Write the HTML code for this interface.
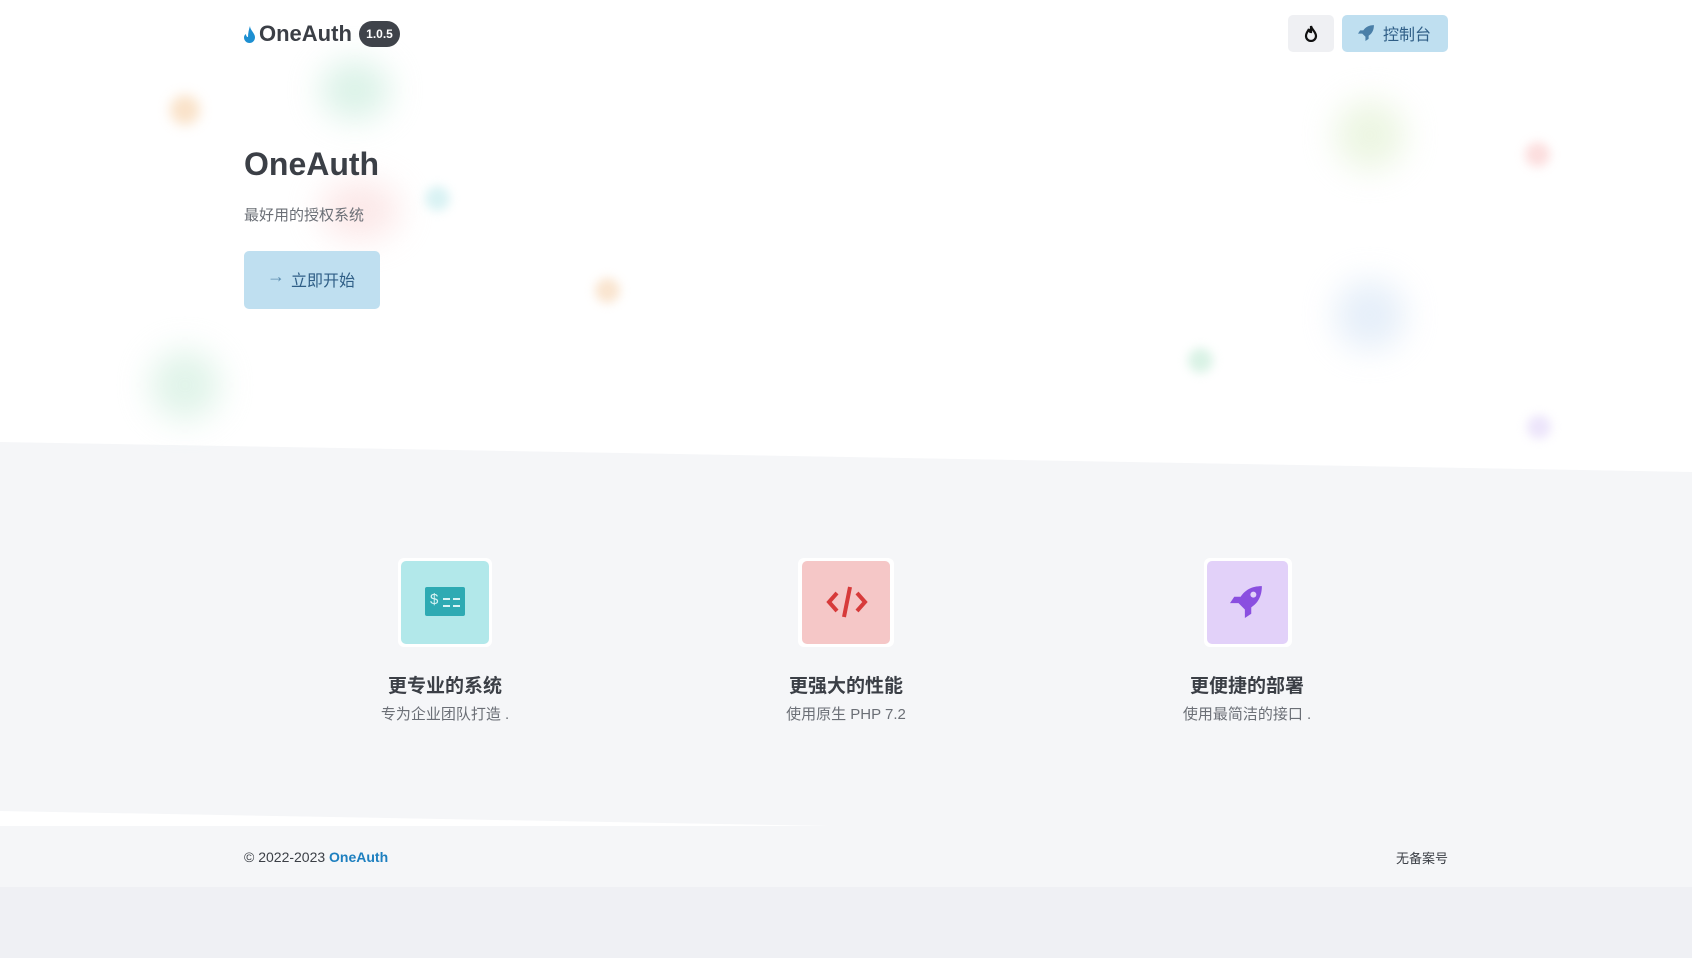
<!DOCTYPE html>
<html><head><meta charset="utf-8"><style>
*{margin:0;padding:0;box-sizing:border-box}
body{width:1692px;height:958px;background:#eff0f4;font-family:"Liberation Sans","Noto Sans CJK SC",sans-serif;position:relative;overflow:hidden;color:#3b3f46}
.abs{position:absolute}
.blob{position:absolute;border-radius:50%;filter:blur(16px);opacity:.75}
</style></head><body>
<div class="abs" style="left:0;top:0;width:1692px;height:887px;background:#f5f6f8"></div>
<svg class="abs" style="left:0;top:0" width="1692" height="958">
<polygon points="0,0 1692,0 1692,472 0,442" fill="#fff"/>
<polygon points="0,811 830,826 0,826" fill="#fff"/>
</svg>
<div class="blob" style="left:320px;top:60px;width:70px;height:60px;background:#cfeee0"></div>
<div class="blob" style="left:170px;top:95px;width:30px;height:30px;background:#f8d9b8;filter:blur(6px)"></div>
<div class="blob" style="left:320px;top:180px;width:80px;height:60px;background:#fbe1e1"></div>
<div class="blob" style="left:425px;top:186px;width:25px;height:25px;background:#cdeef0;filter:blur(5px)"></div>
<div class="blob" style="left:595px;top:278px;width:25px;height:25px;background:#f8dcc0;filter:blur(5px)"></div>
<div class="blob" style="left:150px;top:350px;width:70px;height:70px;background:#d6f0e2"></div>
<div class="blob" style="left:1335px;top:100px;width:70px;height:70px;background:#e6f3d9"></div>
<div class="blob" style="left:1525px;top:142px;width:25px;height:25px;background:#fbd3d3;filter:blur(5px)"></div>
<div class="blob" style="left:1335px;top:280px;width:70px;height:70px;background:#dde9f7"></div>
<div class="blob" style="left:1188px;top:348px;width:25px;height:25px;background:#cdeedd;filter:blur(5px)"></div>
<div class="blob" style="left:1527px;top:415px;width:24px;height:24px;background:#e6dcf9;filter:blur(5px)"></div>

<svg class="abs" style="left:243px;top:26px" width="13" height="17" viewBox="0 0 13 17"><path d="M7 0C7 4 12 7 12 11.5A5.5 5.5 0 0 1 1 11.5C1 9 3 8 3 8C3 10 4 11 5 11C5 7 6 3 7 0Z" fill="#1d8fd1"/></svg>
<div class="abs" style="left:259px;top:21px;font-size:22px;font-weight:bold;color:#3b3f46">OneAuth</div>
<div class="abs" style="left:359px;top:21px;width:41px;height:26px;border-radius:13px;background:#3f434a;color:#fff;font-size:12px;font-weight:bold;text-align:center;line-height:26px">1.0.5</div>

<div class="abs" style="left:1288px;top:15px;width:46px;height:37px;border-radius:5px;background:#eff0f3"></div>
<svg class="abs" style="left:1304px;top:25px" width="14" height="17" viewBox="0 0 14 17"><path d="M7 1C8 5 12 7 12 11A5 5 0 0 1 2 11C2 8 4 6 5 4C5 7 6 7 7 7C7 5 7 3 7 1Z" fill="none" stroke="#111" stroke-width="2.2"/></svg>
<div class="abs" style="left:1342px;top:15px;width:106px;height:37px;border-radius:5px;background:#bfdff0"></div>
<svg class="abs" style="left:1358px;top:24px" width="17" height="17" viewBox="0 0 16 16"><path d="M15 1C10 1 7 3 5 6L2 6 0 9 4 9 7 12 7 16 10 14 10 11C13 9 15 6 15 1Z" fill="#4a7fa8"/></svg>
<div class="abs" style="left:1383px;top:21px;font-size:16px;color:#2f5e86">控制台</div>

<div class="abs" style="left:244px;top:146px;font-size:32px;font-weight:bold;color:#3b3f46">OneAuth</div>
<div class="abs" style="left:244px;top:204px;font-size:15px;color:#6b6f76">最好用的授权系统</div>
<div class="abs" style="left:244px;top:251px;width:136px;height:58px;border-radius:5px;background:#bfdff0"></div>
<div class="abs" style="left:267px;top:266px;font-size:18px;color:#5d8eb0">→</div>
<div class="abs" style="left:291px;top:267px;font-size:16px;color:#2f5e86">立即开始</div>

<div class="abs" style="left:398px;top:558px;width:94px;height:89px;border-radius:6px;background:#fff"></div>
<div class="abs" style="left:401px;top:561px;width:88px;height:83px;border-radius:5px;background:#b2e8ea"></div>
<div class="abs" style="left:425px;top:587px;width:40px;height:29px;border-radius:2px;background:#2eaab3"></div>
<div class="abs" style="left:430px;top:591px;font-size:15px;color:#d8f3f4">$</div>
<div class="abs" style="left:443px;top:598px;width:7px;height:2px;background:#d8f3f4"></div>
<div class="abs" style="left:453px;top:598px;width:7px;height:2px;background:#d8f3f4"></div>
<div class="abs" style="left:443px;top:605px;width:7px;height:2px;background:#d8f3f4"></div>
<div class="abs" style="left:453px;top:605px;width:7px;height:2px;background:#d8f3f4"></div>

<div class="abs" style="left:798px;top:558px;width:96px;height:89px;border-radius:6px;background:#fff"></div>
<div class="abs" style="left:802px;top:561px;width:88px;height:83px;border-radius:5px;background:#f5c7c7"></div>
<svg class="abs" style="left:826px;top:585px" width="42" height="34" viewBox="0 0 42 34"><path d="M11 8L3 17 11 26M31 8L39 17 31 26" fill="none" stroke="#d73a3a" stroke-width="4"/><path d="M24 2L18 32" stroke="#d73a3a" stroke-width="4"/></svg>

<div class="abs" style="left:1204px;top:558px;width:88px;height:89px;border-radius:6px;background:#fff"></div>
<div class="abs" style="left:1207px;top:561px;width:81px;height:83px;border-radius:5px;background:#e2d1f9"></div>
<svg class="abs" style="left:1230px;top:584px" width="34" height="34" viewBox="0 0 16 16"><path d="M15 1C10 1 7 3 5 6L2 6 0 9 4 9 7 12 7 16 10 14 10 11C13 9 15 6 15 1Z" fill="#8a4fe0"/><circle cx="11" cy="5" r="1.4" fill="#e2d1f9"/></svg>

<div class="abs" style="left:345px;top:671px;width:200px;text-align:center;font-size:19px;font-weight:bold;color:#3b3f46">更专业的系统</div>
<div class="abs" style="left:345px;top:703px;width:200px;text-align:center;font-size:15px;color:#6b6f76">专为企业团队打造 .</div>
<div class="abs" style="left:746px;top:671px;width:200px;text-align:center;font-size:19px;font-weight:bold;color:#3b3f46">更强大的性能</div>
<div class="abs" style="left:746px;top:703px;width:200px;text-align:center;font-size:15px;color:#6b6f76">使用原生 PHP 7.2</div>
<div class="abs" style="left:1147px;top:671px;width:200px;text-align:center;font-size:19px;font-weight:bold;color:#3b3f46">更便捷的部署</div>
<div class="abs" style="left:1147px;top:703px;width:200px;text-align:center;font-size:15px;color:#6b6f76">使用最简洁的接口 .</div>

<div class="abs" style="left:244px;top:849px;font-size:14px;color:#3b3f46">© 2022-2023 <span style="color:#1d7fbf;font-weight:bold">OneAuth</span></div>
<div class="abs" style="left:1390px;top:848px;width:58px;text-align:right;font-size:13px;color:#3b3f46">无备案号</div>
</body></html>
